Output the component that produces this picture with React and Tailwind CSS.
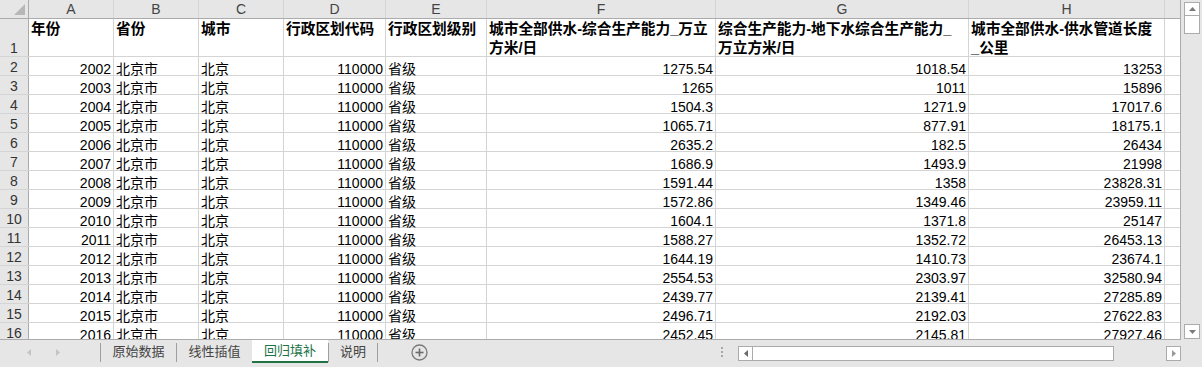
import React from "react";

const rows = [
  ["2002", "1275.54", "1018.54", "13253"],
  ["2003", "1265", "1011", "15896"],
  ["2004", "1504.3", "1271.9", "17017.6"],
  ["2005", "1065.71", "877.91", "18175.1"],
  ["2006", "2635.2", "182.5", "26434"],
  ["2007", "1686.9", "1493.9", "21998"],
  ["2008", "1591.44", "1358", "23828.31"],
  ["2009", "1572.86", "1349.46", "23959.11"],
  ["2010", "1604.1", "1371.8", "25147"],
  ["2011", "1588.27", "1352.72", "26453.13"],
  ["2012", "1644.19", "1410.73", "23674.1"],
  ["2013", "2554.53", "2303.97", "32580.94"],
  ["2014", "2439.77", "2139.41", "27285.89"],
  ["2015", "2496.71", "2192.03", "27622.83"],
  ["2016", "2452.45", "2145.81", "27927.46"],
];

const W = ["w-[85px]", "w-[85px]", "w-[85px]", "w-[102px]", "w-[101px]", "w-[229px]", "w-[253px]", "w-[196px]"];
const letters = ["A", "B", "C", "D", "E", "F", "G", "H"];
const heads = [
  ["年份"],
  ["省份"],
  ["城市"],
  ["行政区划代码"],
  ["行政区划级别"],
  ["城市全部供水-综合生产能力_万立", "方米/日"],
  ["综合生产能力-地下水综合生产能力_", "万立方米/日"],
  ["城市全部供水-供水管道长度", "_公里"],
];

function NumCell({ w, children }) {
  return (
    <div className={`${w} h-[19px] shrink-0 border-r border-[#d4d4d4] flex items-end justify-end pr-[2px] overflow-hidden`}>
      <span className="leading-[14px] whitespace-nowrap">{children}</span>
    </div>
  );
}
function TxtCell({ w, children }) {
  return (
    <div className={`${w} h-[19px] shrink-0 border-r border-[#d4d4d4] flex items-end justify-start pl-[2px] overflow-hidden`}>
      <span className="leading-[14px] whitespace-nowrap">{children}</span>
    </div>
  );
}

export default function App() {
  return (
    <div className="w-[1202px] h-[367px] bg-[#e6e6e6] flex flex-col overflow-hidden font-['Liberation_Sans','Noto_Sans_CJK_SC',sans-serif] text-[14px] text-black">
      <div className="flex h-[340px] shrink-0">
        {/* sheet */}
        <div className="w-[1181px] h-[340px] shrink-0 overflow-hidden bg-white border-r border-b border-[#ababab]">
          {/* column header */}
          <div className="flex h-[19px] border-b border-[#ababab] bg-[#e6e6e6] text-[#444]">
            <div className="w-[29px] shrink-0 border-r border-[#ababab] relative">
              <svg className="absolute left-[14px] top-[4px]" width="11" height="11" viewBox="0 0 11 11">
                <polygon points="11,0 11,11 0,11" fill="#b7b7b7" />
              </svg>
            </div>
            {letters.map((l, i) => (
              <div key={l} className={`${W[i]} shrink-0 border-r border-[#d4d4d4] flex items-center justify-center leading-[18px]`}>
                {l}
              </div>
            ))}
            <div className="w-[15px] shrink-0" />
          </div>
          {/* row 1 */}
          <div className="flex h-[38px] border-b border-[#d4d4d4]">
            <div className="w-[29px] shrink-0 bg-[#e6e6e6] border-r border-[#ababab] flex items-end justify-center text-[#333]">
              <span className="leading-[16px]">1</span>
            </div>
            {heads.map((h, i) => (
              <div key={i} className={`${W[i]} shrink-0 border-r border-[#d4d4d4] pl-[2px] pt-[1px] font-bold text-[14.7px] leading-[19px] overflow-hidden`}>
                {h.map((line, j) => (
                  <div key={j} className="whitespace-nowrap">{line}</div>
                ))}
              </div>
            ))}
            <div className="w-[15px] shrink-0" />
          </div>
          {rows.map((r, idx) => (
            <div key={idx} className="flex h-[19px] border-b border-[#d4d4d4]">
              <div className="w-[29px] shrink-0 bg-[#e6e6e6] border-r border-[#ababab] flex items-end justify-center text-[#333]">
                <span className="leading-[15px]">{idx + 2}</span>
              </div>
              <NumCell w={W[0]}>{r[0]}</NumCell>
              <TxtCell w={W[1]}>北京市</TxtCell>
              <TxtCell w={W[2]}>北京</TxtCell>
              <NumCell w={W[3]}>110000</NumCell>
              <TxtCell w={W[4]}>省级</TxtCell>
              <NumCell w={W[5]}>{r[1]}</NumCell>
              <NumCell w={W[6]}>{r[2]}</NumCell>
              <NumCell w={W[7]}>{r[3]}</NumCell>
              <div className="w-[15px] shrink-0" />
            </div>
          ))}
        </div>
        {/* vertical scrollbar */}
        <div className="flex-1 flex flex-col pl-[3px]">
          <div className="w-[16px] h-[14px] mt-[2px] bg-white border border-[#ababab] flex items-center justify-center">
            <svg width="7" height="4" viewBox="0 0 7 4"><polygon points="0,4 7,4 3.5,0" fill="#7a7a7a" /></svg>
          </div>
          <div className="w-[16px] h-[18px] bg-white border border-[#ababab] border-t-0" />
          <div className="flex-1" />
          <div className="w-[16px] h-[15px] bg-white border border-[#ababab] flex items-center justify-center">
            <svg width="7" height="4" viewBox="0 0 7 4"><polygon points="0,0 7,0 3.5,4" fill="#7a7a7a" /></svg>
          </div>
          <div className="h-[1px]" />
        </div>
      </div>
      {/* tab bar */}
      <div className="h-[27px] flex items-start text-[13px] text-[#444]">
        <div className="w-[100px] h-[24px] shrink-0 flex items-center">
          <svg className="ml-[27px]" width="4" height="7" viewBox="0 0 4 7"><polygon points="4,0 4,7 0,3.5" fill="#c4c4c4" /></svg>
          <svg className="ml-[25px]" width="4" height="7" viewBox="0 0 4 7"><polygon points="0,0 0,7 4,3.5" fill="#c4c4c4" /></svg>
        </div>
        <div className="w-px h-[19px] mt-[3px] bg-[#9e9e9e] shrink-0" />
        <div className="w-[75px] h-[24px] shrink-0 flex items-center justify-center">原始数据</div>
        <div className="w-px h-[19px] mt-[3px] bg-[#9e9e9e] shrink-0" />
        <div className="w-[75px] h-[24px] shrink-0 flex items-center justify-center">线性插值</div>
        <div className="w-[76px] h-[23px] shrink-0 bg-white border-b-2 border-[#217346] flex items-center justify-center text-[#217346]">回归填补</div>
        <div className="w-px h-[19px] mt-[3px] bg-[#9e9e9e] shrink-0" />
        <div className="w-[48px] h-[24px] shrink-0 flex items-center justify-center">说明</div>
        <div className="w-px h-[19px] mt-[3px] bg-[#9e9e9e] shrink-0" />
        <div className="w-[33px] shrink-0" />
        <div className="w-[17px] h-[24px] shrink-0 flex items-center justify-center">
          <svg width="17" height="17" viewBox="0 0 17 17">
            <circle cx="8.5" cy="8.5" r="7.5" fill="none" stroke="#7a7a7a" strokeWidth="1.3" />
            <line x1="8.5" y1="4.5" x2="8.5" y2="12.5" stroke="#6a6a6a" strokeWidth="1.6" />
            <line x1="4.5" y1="8.5" x2="12.5" y2="8.5" stroke="#6a6a6a" strokeWidth="1.6" />
          </svg>
        </div>
        <div className="w-[293px] shrink-0" />
        <div className="w-[2px] h-[24px] shrink-0 flex flex-col items-center justify-center gap-[2px]">
          <div className="w-[2px] h-[2px] bg-[#a8a8a8]" />
          <div className="w-[2px] h-[2px] bg-[#a8a8a8]" />
          <div className="w-[2px] h-[2px] bg-[#a8a8a8]" />
        </div>
        <div className="w-[15px] shrink-0" />
        {/* horizontal scrollbar */}
        <div className="w-[443px] h-[15px] mt-[6px] shrink-0 flex">
          <div className="w-[15px] h-[15px] bg-white border border-[#ababab] flex items-center justify-center shrink-0">
            <svg width="4" height="7" viewBox="0 0 4 7"><polygon points="4,0 4,7 0,3.5" fill="#6a6a6a" /></svg>
          </div>
          <div className="w-[361px] h-[15px] bg-white border border-[#ababab] border-l-0 shrink-0" />
          <div className="flex-1" />
          <div className="w-[15px] h-[15px] bg-white border border-[#ababab] flex items-center justify-center shrink-0">
            <svg width="4" height="7" viewBox="0 0 4 7"><polygon points="0,0 0,7 4,3.5" fill="#9a9a9a" /></svg>
          </div>
        </div>
      </div>
    </div>
  );
}
